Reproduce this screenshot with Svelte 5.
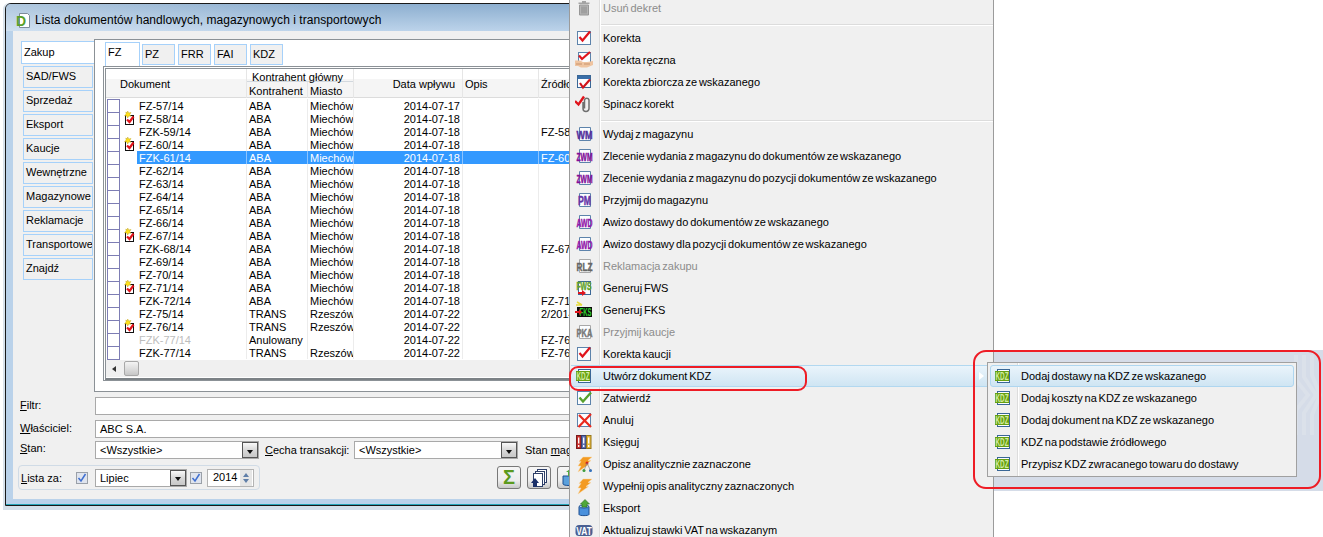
<script>
  const M = 'Miechów', R = 'Rzeszów';
  const rows = [
    ['FZ-57/14', 0, 'ABA', M, '2014-07-17', ''],
    ['FZ-58/14', 1, 'ABA', M, '2014-07-18', ''],
    ['FZK-59/14', 0, 'ABA', M, '2014-07-18', 'FZ-58/14'],
    ['FZ-60/14', 1, 'ABA', M, '2014-07-18', ''],
    ['FZK-61/14', 0, 'ABA', M, '2014-07-18', 'FZ-60/14', 'sel'],
    ['FZ-62/14', 0, 'ABA', M, '2014-07-18', ''],
    ['FZ-63/14', 0, 'ABA', M, '2014-07-18', ''],
    ['FZ-64/14', 0, 'ABA', M, '2014-07-18', ''],
    ['FZ-65/14', 0, 'ABA', M, '2014-07-18', ''],
    ['FZ-66/14', 0, 'ABA', M, '2014-07-18', ''],
    ['FZ-67/14', 1, 'ABA', M, '2014-07-18', ''],
    ['FZK-68/14', 0, 'ABA', M, '2014-07-18', 'FZ-67/14'],
    ['FZ-69/14', 0, 'ABA', M, '2014-07-18', ''],
    ['FZ-70/14', 0, 'ABA', M, '2014-07-18', ''],
    ['FZ-71/14', 1, 'ABA', M, '2014-07-18', ''],
    ['FZK-72/14', 0, 'ABA', M, '2014-07-18', 'FZ-71/14'],
    ['FZ-75/14', 0, 'TRANS', R, '2014-07-22', '2/2014'],
    ['FZ-76/14', 1, 'TRANS', R, '2014-07-22', ''],
    ['FZK-77/14', 0, 'Anulowany', '', '2014-07-22', 'FZ-76/14', 'off'],
    ['FZK-77/14', 0, 'TRANS', R, '2014-07-22', 'FZ-76/14']
  ];
  const sideTabs = ['SAD/FWS', 'Sprzedaż', 'Eksport', 'Kaucje', 'Wewnętrzne', 'Magazynowe', 'Reklamacje', 'Transportowe', 'Znajdź'];
  const topTabs = ['PZ', 'FRR', 'FAI', 'KDZ'];
  const menu = [
    { i: 'trash', t: 'Usuń dekret', off: true },
    { sep: true },
    { i: 'check', t: 'Korekta' },
    { i: 'hand', t: 'Korekta ręczna' },
    { i: 'win', t: 'Korekta zbiorcza ze wskazanego' },
    { i: 'clip', t: 'Spinacz korekt' },
    { sep: true },
    { i: 'WM', t: 'Wydaj z magazynu' },
    { i: 'ZWM', t: 'Zlecenie wydania z magazynu do dokumentów ze wskazanego' },
    { i: 'ZWM', t: 'Zlecenie wydania z magazynu do pozycji dokumentów ze wskazanego' },
    { i: 'PM', t: 'Przyjmij do magazynu' },
    { i: 'AWD', t: 'Awizo dostawy do dokumentów ze wskazanego' },
    { i: 'AWD', t: 'Awizo dostawy dla pozycji dokumentów ze wskazanego' },
    { i: 'RLZ', t: 'Reklamacja zakupu', off: true },
    { i: 'FWS', t: 'Generuj FWS' },
    { i: 'FKS', t: 'Generuj FKS' },
    { i: 'PKA', t: 'Przyjmij kaucje', off: true },
    { i: 'check', t: 'Korekta kaucji' },
    { i: 'KDZ', t: 'Utwórz dokument KDZ', hover: true },
    { i: 'ok', t: 'Zatwierdź' },
    { i: 'x', t: 'Anuluj' },
    { i: 'books', t: 'Księguj' },
    { i: 'boltd', t: 'Opisz analitycznie zaznaczone' },
    { i: 'bolt', t: 'Wypełnij opis analityczny zaznaczonych' },
    { i: 'export', t: 'Eksport' },
    { i: 'VAT', t: 'Aktualizuj stawki VAT na wskazanym' }
  ];
  const sub = ['Dodaj dostawy na KDZ ze wskazanego', 'Dodaj koszty na KDZ ze wskazanego', 'Dodaj dokument na KDZ ze wskazanego', 'KDZ na podstawie źródłowego', 'Przypisz KDZ zwracanego towaru do dostawy'];
  const txtColor = { WM: '#55309c', ZWM: '#820e98', PM: '#6535a8', AWD: '#9216a8', RLZ: '#666', PKA: '#777' };
</script>

{#snippet page()}
  <rect x="2.500" y="2.500" width="13" height="13" fill="#fbfdff" stroke="#5d83ab" />
{/snippet}

{#snippet icon(k)}
  <svg class="ico" width="18" height="18" viewBox="0 0 18 18">
    {#if k === 'trash'}
      <path d="M3.500 3.500h11V5h-11zM7 2h4v1.500H7z" fill="#a3a3a3" />
      <path d="M4.500 6h9v10h-9z" fill="#b5b5b5" stroke="#979797" />
      <path d="M7 7.500v7M9 7.500v7M11 7.500v7" stroke="#8a8a8a" />
    {:else if k === 'check'}
      {@render page()}
      <path d="M4.500 8l3 3.500L15 2.500" fill="none" stroke="#e0141c" stroke-width="2.200" />
    {:else if k === 'hand'}
      <rect x="3.500" y="1.500" width="12" height="10" fill="#fbfdff" stroke="#5d83ab" />
      <path d="M4 4.500l3 3.500 8-7" fill="none" stroke="#e0141c" stroke-width="2.200" />
      <path d="M0 9.500h5l3 1.500h4l6-1v4l-6 2.500H6l-3-1.500H0z" fill="#efc4a0" />
      <path d="M1 13h6M9 13h6" stroke="#c9936c" />
    {:else if k === 'win'}
      <rect x="2.500" y="2.500" width="13" height="12" fill="#fbfdff" stroke="#3a6796" />
      <rect x="3" y="3" width="12" height="3" fill="#3a6ea8" />
      <path d="M5 10l3 4.500 7-8" fill="none" stroke="#d0141c" stroke-width="2.200" />
    {:else if k === 'clip'}
      <path d="M0 6l3.500 3.500L9 1.500" fill="none" stroke="#e0141c" stroke-width="2.400" />
      <path d="M8 7v6.500a3 3 0 0 0 6 0V5a2.300 2.300 0 0 0-4.500 0v8.500" fill="none" stroke="#6f6f6f" stroke-width="1.500" />
    {:else if k === 'KDZ'}
      <rect x="3.500" y="2.500" width="12" height="13" fill="#fbfdff" stroke="#3a6796" />
      <rect x="1" y="4" width="14" height="10" fill="#66a010" />
      <text class="it" x="8" y="12.500" font-size="10" fill="#d4ecA0" textLength="13" lengthAdjust="spacingAndGlyphs">KDZ</text>
    {:else if k === 'FWS'}
      <rect x="3.500" y="2.500" width="12" height="13" fill="#fbfdff" stroke="#3a6796" />
      <text class="it bold" x="9" y="11" font-size="11" fill="#62a22a" stroke="#62a22a" textLength="15" lengthAdjust="spacingAndGlyphs">FWS</text>
      <path d="M3 13h4v-2l4 3-4 3v-2H3z" fill="#e0141c" />
    {:else if k === 'FKS'}
      <path d="M2 1l5 3M1 4h6" stroke="#e6dc3c" stroke-width="1.500" />
      <rect x="2" y="6" width="15" height="10" fill="#0c0c0c" />
      <text class="it" x="10.500" y="14.500" font-size="10.500" fill="#2ed42e" textLength="12" lengthAdjust="spacingAndGlyphs">FKS</text>
      <path d="M0 10h4V8l3 3-3 3v-2H0z" fill="#e0141c" />
    {:else if k === 'ok'}
      {@render page()}
      <path d="M4.500 8.500l3.500 4L16 3.500" fill="none" stroke="#58a02c" stroke-width="2.400" />
    {:else if k === 'x'}
      {@render page()}
      <path d="M4 4l12 12M16 3L3.500 16" fill="none" stroke="#ea2a1e" stroke-width="2.200" />
    {:else if k === 'books'}
      <rect x="1.500" y="2.500" width="4.500" height="13" fill="#c8302c" stroke="#7a1c1c" />
      <rect x="6.500" y="2.500" width="4.500" height="13" fill="#5f6fb0" stroke="#36406e" />
      <rect x="11.500" y="2.500" width="4.500" height="13" fill="#e8b838" stroke="#96761c" />
      <path d="M3.700 4.500v6M3.700 12v2M8.700 4.500v6M8.700 12v2M13.700 4.500v6M13.700 12v2" stroke="#fff" stroke-width="1.300" />
    {:else if k === 'bolt' || k === 'boltd'}
      <path d="M8 2h9l-4 3.500h3l-5 4h2.500L3 17l3-6H3l3-4.500H4z" fill="#f39a22" stroke="#f6d8a8" stroke-width=".5" />
      {#if k === 'boltd'}
        <circle cx="12" cy="8" r="1.500" fill="#d8241c" /><circle cx="9" cy="15.500" r="1.500" fill="#3aa03a" /><circle cx="15.500" cy="15.500" r="1.500" fill="#2a6ec0" />
        <path d="M12 8l-3 7.500M12 8l3.500 7.500" stroke="#777" stroke-width=".6" />
      {/if}
    {:else if k === 'export'}
      <path d="M4 7.500h10v8c0 1.500-10 1.500-10 0z" fill="#4a90dc" stroke="#1e4f90" />
      <ellipse cx="9" cy="7.500" rx="5" ry="1.500" fill="#a8d0f4" stroke="#1e4f90" />
      <path d="M7 8V5H5.500L10 .5l4.500 4.500H12v3z" fill="#50a83a" stroke="#2c6e20" stroke-width=".6" />
    {:else if k === 'VAT'}
      <rect x="0.500" y="4" width="17" height="11" rx="3.500" fill="#4a5f92" />
      <text class="it" x="9" y="13.500" font-size="11" fill="#fff" textLength="15.500" lengthAdjust="spacingAndGlyphs">VAT</text>
    {:else}
      <path d="M4.500 2.500h11v13h-11z" fill="#fbfdff" stroke={k === 'RLZ' || k === 'PKA' ? '#a8a8a8' : '#5d83ab'} />
      <text class="it bold" x="9.500" y="13.500" font-size={k === 'PM' ? 12 : 11.500} fill={txtColor[k]} stroke={txtColor[k]} textLength={k === 'PM' ? 13 : 16} lengthAdjust="spacingAndGlyphs">{k}</text>
    {/if}
  </svg>
{/snippet}

{#snippet combo(text, cls)}
  <div class="combo {cls}"><span class="val">{text}</span><span class="drop"><i></i></span></div>
{/snippet}

<div class="screen">
  <section class="window">
    <header class="title">
      <svg width="17" height="17" viewBox="0 0 17 17" class="logo">
        <path d="M4.500 1.500h8l2 2v12h-10z" fill="#fff" stroke="#7d8c9a" />
        <text x="1" y="13.500" font-size="14" font-weight="700" fill="#5aa028" font-family="Liberation Sans, sans-serif">D</text>
      </svg>
      <span>Lista dokumentów handlowych, magazynowych i transportowych</span>
    </header>
    <div class="body">
      <div class="main">
        <nav class="side">
          <div class="stab active">Zakup</div>
          {#each sideTabs as t}<div class="stab">{t}</div>{/each}
        </nav>
        <div class="panel">
          <div class="toptabs">
            <div class="ttab active">FZ</div>
            {#each topTabs as t}<div class="ttab">{t}</div>{/each}
          </div>
          <div class="grid">
            <div class="inner">
              <div class="cols head">
                <div class="h-cell doc">Dokument</div>
                <div class="group">
                  <div class="gt">Kontrahent główny</div>
                  <div class="gs"><span class="g1">Kontrahent</span><span class="g2">Miasto</span></div>
                </div>
                <div class="h-cell date">Data wpływu</div>
                <div class="h-cell opis">Opis</div>
                <div class="h-cell src">Źródłowy</div>
              </div>
              {#each rows as r}
                <div class="cols row {r[6] || ''}">
                  <div class="chk">
                    <span class="box"></span>
                    {#if r[1]}
                      <svg class="mark" width="12" height="14" viewBox="0 0 12 14">
                        <rect x="1.500" y="4.500" width="8" height="9" fill="#fff" stroke="#111" />
                        <path d="M3 8.500l2.500 2.500L9.500 5.500" fill="none" stroke="#e0141c" stroke-width="2.200" />
                        <path d="M3.700 0l1 2 2.300-.5L5.700 3.500 7 5.300l-2.300-.3-1 2-.9-2L.5 4.600l1.700-1.500L1.800 1l1.500 1z" fill="#ffe21a" stroke="#b89a10" stroke-width=".4" />
                      </svg>
                    {/if}
                  </div>
                  <div class="c">{r[0]}</div>
                  <div class="c">{r[2]}</div>
                  <div class="c">{r[3]}</div>
                  <div class="c right">{r[4]}</div>
                  <div class="c"></div>
                  <div class="c nob">{r[5]}</div>
                </div>
              {/each}
              <div class="scroll"><i class="larrow"></i><span class="thumb"></span></div>
            </div>
          </div>
        </div>
      </div>

      <div class="frow first"><label class="low" for="f1"><u>F</u>iltr:</label><div class="input" id="f1"></div></div>
      <div class="frow second"><label class="low" for="f2"><u>W</u>łaściciel:</label><div class="input" id="f2">ABC S.A.</div></div>
      <div class="frow">
        <label for="f3"><u>S</u>tan:</label>
        {@render combo('<Wszystkie>', 'wide')}
        <span class="l2"><u>C</u>echa transakcji:</span>
        {@render combo('<Wszystkie>', 'wide')}
        <span class="l3">Stan <u>m</u>agazynu:</span>
      </div>
      <div class="bottom">
        <div class="gbox">
          <span class="lz"><u>L</u>ista za:</span>
          <span class="cb"><svg width="12" height="12" viewBox="0 0 12 12"><path d="M2.500 6l2.500 3 4.500-7" fill="none" stroke="#3f6fd0" stroke-width="1.500" /></svg></span>
          {@render combo('Lipiec', 'month')}
          <span class="cb c2"><svg width="12" height="12" viewBox="0 0 12 12"><path d="M2.500 6l2.500 3 4.500-7" fill="none" stroke="#3f6fd0" stroke-width="1.500" /></svg></span>
          <div class="spin"><span>2014</span><div class="sb"><i class="up"></i><i class="down"></i></div></div>
        </div>
        <div class="btns">
          <button class="tb sigma">Σ</button>
          <button class="tb" aria-label="Kopiuj">
            <svg width="20" height="20" viewBox="0 0 20 20">
              <rect x="8.500" y="1.500" width="9" height="13" fill="#fff" stroke="#2e3f68" />
              <rect x="6.500" y="3.500" width="9" height="13" fill="#fff" stroke="#2e3f68" />
              <rect x="4.500" y="5.500" width="9" height="13" fill="#fff" stroke="#2e3f68" />
              <path d="M6 10l4 5H8v4H4v-4H2z" fill="#1a2f68" />
            </svg>
          </button>
          <button class="tb" aria-label="Eksport">
            <svg width="20" height="20" viewBox="0 0 20 20">
              <path d="M4 8h12v8c0 2-12 2-12 0z" fill="#5aa0dc" stroke="#1e4f90" />
              <path d="M9 8V4H7l4-3 4 3h-2v4z" fill="#50a83a" />
            </svg>
          </button>
        </div>
      </div>
    </div>
  </section>

  <div class="behind">
    <svg width="30" height="80" viewBox="0 0 30 80" class="wm"><path d="M3 0v25l12 15L3 55v25M11 0v22l12 18-12 18v22M19 0v20l8 20-8 20v20" fill="none" stroke="#dbe1ea" stroke-width="4" /></svg>
  </div>

  <div class="menu">
    {#each menu as m}
      {#if m.sep}
        <div class="msep"></div>
      {:else}
        <div class="mi" class:off={m.off} class:hover={m.hover}>
          {@render icon(m.i)}
          <span>{m.t}</span>
          {#if m.hover}<i class="marrow"></i>{/if}
        </div>
      {/if}
    {/each}
  </div>

  <div class="submenu">
    {#each sub as s, i}
      <div class="si" class:hover={i === 0}>
        {@render icon('KDZ')}
        <span>{s}</span>
      </div>
    {/each}
  </div>

  <div class="mark-oval"></div>
  <div class="mark-rect"></div>
</div>

<style>
  :global(body) { margin: 0; background: #fff; }
  .screen {
    position: relative; width: 1323px; height: 537px; overflow: hidden; background: #fff;
    font-family: "Liberation Sans", Arial, sans-serif; font-size: 11px; color: #000; line-height: 13px;
  }
  u { text-decoration: underline; }

  .window {
    position: absolute; left: 5px; top: 3px; width: 600px; height: 503px; box-sizing: border-box;
    border: 1px solid #1a1a1a; border-radius: 6px 6px 0 0; background: #bad2ea;
    box-shadow: -2px 0 0 #d9e3ec, -2px 4px 0 #d5e0ea, inset 0 -1px 0 #27a5b8;
    display: flex; flex-direction: column;
  }
  .title {
    height: 27px; display: flex; align-items: center; padding-left: 9px; gap: 3px; flex: none;
    background: linear-gradient(90deg, rgba(255,255,255,.3), rgba(255,255,255,0) 55%), linear-gradient(180deg, #8dafd0, #bcd3ea);
    border-radius: 5px 5px 0 0; font-size: 12px; letter-spacing: .05px; padding-top: 6px; box-sizing: border-box;
  }
  .logo { flex: none; }
  .body { flex: none; height: 468px; margin-left: 7px; background: #f0f0f0; box-sizing: border-box; padding-top: 8px; }

  .main { display: flex; height: 353px; }
  .side { width: 81px; flex: none; padding: 2px 0 0 8px; box-sizing: border-box; display: flex; flex-direction: column; align-items: flex-start; }
  .stab {
    width: 70px; height: 22px; box-sizing: border-box; margin: 0 0 2px 2px; padding-left: 2px;
    border: 1px solid #a6d1fa; line-height: 19px; background: #f0f0f0; white-space: nowrap; overflow: hidden;
  }
  .stab.active { width: 73px; height: 23px; margin: 0 0 2px 0; background: #fff; border-right: none; padding-left: 2px; line-height: 21px; }

  .panel { flex: 1; min-width: 0; border: 1px solid #8b9196; border-right: none; background: #fff; }
  .toptabs { display: flex; height: 24px; margin: 2px 0 0 10px; align-items: flex-start; gap: 3px; }
  .ttab {
    width: 33px; height: 21px; margin-top: 2px; box-sizing: border-box; border: 1px solid #a6d1fa;
    background: #f0f0f0; padding-left: 2px; line-height: 19px;
  }
  .ttab.active { width: 35px; height: 24px; margin: 0 -1px 0 0; background: #fff; border-bottom: none; line-height: 19px; }

  .grid { margin: 0 0 0 8px; height: 315px; box-sizing: border-box; border: 1px solid #8b9196; border-right: none; padding: 1px 0 0 1px; background: #fff; }
  .inner { height: 312px; box-sizing: border-box; border: 1px solid #8b9196; border-right: none; border-bottom: 2px solid #7c8286; }
  .cols { display: grid; grid-template-columns: 31px 110px 61px 46px 109px 76px 80px; }
  .head { height: 30px; background: linear-gradient(180deg, #fff 0, #fff 10px, #f5f5f5 10px, #f5f5f5 28px, #dcdcdc 28px, #dcdcdc 29px, #fff 29px); }
  .h-cell { border-right: 1px solid #e6e6e6; line-height: 31px; height: 29px; }
  .doc { padding-left: 14px; grid-column: 1 / 3; }
  .group { grid-column: 3 / 5; border-right: 1px solid #e6e6e6; height: 29px; }
  .gt { height: 12px; line-height: 17px; padding-left: 5px; border-bottom: 1px solid #d2d8de; }
  .gs { display: grid; grid-template-columns: 61px 46px; }
  .g1 { padding-left: 2px; line-height: 18px; border-right: 1px solid #e6e6e6; height: 16px; }
  .g2 { padding-left: 2px; line-height: 18px; }
  .date { text-align: right; padding-right: 7px; }
  .opis { padding-left: 2px; }
  .src { padding-left: 2px; border-right: none; white-space: nowrap; }

  .row { height: 13px; }
  .chk { display: flex; align-items: flex-start; padding-left: 1px; }
  .box { width: 11px; height: 12px; border: 1px solid #7d7db4; border-bottom: none; flex: none; }
  .row:nth-last-child(2) .box { border-bottom: 1px solid #7d7db4; }
  .mark { margin: -1px 0 0 4px; flex: none; overflow: visible; }
  .c { padding-left: 2px; border-right: 1px solid #ececec; white-space: nowrap; overflow: hidden; line-height: 15px; height: 13px; }
  .c.right { text-align: right; padding: 0 2px 0 0; }
  .c.nob { border-right: none; }
  .sel .c { background: #3399ff; color: #fff; border-right-color: #8cc4ff; }
  .off .c:nth-child(2) { color: #bdbdbd; }

  .scroll { height: 17px; margin-top: 1px; background: #f0f0f0; display: flex; align-items: center; }
  .larrow { width: 0; height: 0; border: 3px solid transparent; border-right: 4px solid #333; border-left: none; margin-left: 6px; }
  .thumb { width: 15px; height: 15px; margin-left: 8px; box-sizing: border-box; border: 1px solid #a8a8a8; border-radius: 2px; background: linear-gradient(180deg, #f4f4f4, #dcdcdc 55%, #c6c6c6); }

  .frow { display: flex; align-items: center; height: 18px; margin-top: 3px; }
  .frow.first, .frow.second { margin-top: 5px; }
  .frow label { width: 82px; flex: none; padding-left: 7px; box-sizing: border-box; height: 18px; line-height: 15px; }
  .frow label.low { line-height: 17px; }
  .input { flex: 1; height: 18px; box-sizing: border-box; border: 1px solid #a9a9a9; background: #fff; padding-left: 4px; line-height: 17px; }
  .combo { height: 18px; box-sizing: border-box; border: 1px solid #a9a9a9; background: #fff; display: flex; flex: none; align-items: stretch; }
  .combo.wide { width: 164px; }
  .combo.month { width: 92px; margin-left: 7px; }
  .val { flex: 1; padding-left: 4px; line-height: 17px; }
  .drop { width: 16px; box-sizing: border-box; border: 1px solid #555; background: linear-gradient(180deg, #fafafa, #d8d8d8 50%, #c8c8c8); display: flex; align-items: center; justify-content: center; }
  .drop i { width: 0; height: 0; border: 3px solid transparent; border-top: 4px solid #111; border-bottom: none; margin-top: 3px; }
  .l2 { margin: 0 6px; width: 83px; flex: none; white-space: nowrap; }
  .l3 { margin-left: 7px; white-space: nowrap; }

  .bottom { display: flex; margin-top: 6px; margin-left: 5px; align-items: flex-start; }
  .gbox {
    width: 242px; height: 25px; box-sizing: border-box; border: 1px solid #d0dbe6; border-radius: 4px;
    display: flex; align-items: center; padding-left: 2px; flex: none;
  }
  .lz { width: 55px; flex: none; line-height: 15px; height: 13px; }
  .cb { width: 12px; height: 12px; border: 1px solid #9aa0a8; box-sizing: border-box; background: #dfe4ee; display: block; flex: none; }
  .cb svg { display: block; margin: -1px; }
  .c2 { margin-left: 3px; }
  .spin { width: 47px; height: 18px; margin-left: 5px; box-sizing: border-box; border: 1px solid #b4b4b4; background: #fff; display: flex; align-items: center; padding-left: 5px; justify-content: space-between; }
  .sb { width: 12px; height: 16px; display: flex; flex-direction: column; align-items: center; justify-content: center; gap: 2px; background: #e6e6e6; margin-right: 1px; }
  .up { width: 0; border: 3px solid transparent; border-bottom: 4px solid #5f7ea8; border-top: none; }
  .down { width: 0; border: 3px solid transparent; border-top: 4px solid #5f7ea8; border-bottom: none; }
  .btns { display: flex; gap: 6px; margin-left: 237px; margin-top: 1px; }
  .tb {
    width: 24px; height: 23px; padding: 0; box-sizing: border-box; border: 1px solid #787878; border-radius: 3px;
    background: linear-gradient(180deg, #f6f6f6, #ececec 65%, #c8c8c8); display: flex; align-items: center; justify-content: center; font: inherit;
  }
  .sigma { color: #5b9a1e; font-size: 20px; font-weight: 700; font-family: "Liberation Sans", sans-serif; }

  .behind { position: absolute; left: 993px; top: 350px; width: 330px; height: 141px; background: #d5dce8; overflow: hidden; }
  .wm { position: absolute; right: 0; top: 5px; }

  .menu {
    position: absolute; left: 569px; top: -3px; width: 425px; height: 560px; box-sizing: border-box;
    border: 1px solid #9b9b9b; border-width: 0 1px; word-spacing: -1.25px;
    background: linear-gradient(90deg, #f0f0f0 0 29px, #dcdcdc 29px 30px, #fff 30px 31px, #f0f0f0 31px);
  }
  .mi { height: 22px; display: flex; align-items: center; box-sizing: border-box; padding-left: 5px; position: relative; white-space: nowrap; }
  .mi span { margin-left: 10px; }
  .mi.off { color: #8c8c8c; }
  .mi.hover { background: linear-gradient(180deg, #eaf4fb, #cfe5f3); border: 1px solid #b2d8f0; border-width: 1px 0; margin: 0 0 0 1px; padding-left: 4px; }
  .msep { height: 8px; margin-left: 31px; position: relative; }
  .msep::after { content: ""; display: block; position: absolute; left: 0; right: 0; top: 5px; height: 1px; background: #dcdcdc; box-shadow: 0 1px 0 #fff; }
  .marrow { position: absolute; right: 9px; top: 6px; width: 0; height: 0; border: 4px solid transparent; border-left: 5px solid #fff; border-right: none; }
  .ico { flex: none; display: block; }
  .it { font-family: "Liberation Sans", sans-serif; font-weight: 700; text-anchor: middle; }
  .bold { stroke-width: .45px; }

  .submenu {
    position: absolute; left: 987px; top: 362px; width: 310px; height: 115px; box-sizing: border-box; padding: 2px; word-spacing: -1.25px;
    border: 1px solid #a0a0a0; background: linear-gradient(90deg, #f0f0f0 0 29px, #dcdcdc 29px 30px, #fff 30px 31px, #f0f0f0 31px);
  }
  .si { height: 22px; display: flex; align-items: center; box-sizing: border-box; padding-left: 3px; white-space: nowrap; border: 1px solid transparent; }
  .si.hover { background: linear-gradient(180deg, #eaf4fb, #cfe5f3); border-color: #aed6f0; border-radius: 3px; }
  .si span { margin-left: 9px; }

  .mark-oval { position: absolute; left: 569px; top: 366px; width: 238px; height: 25px; box-sizing: border-box; border: 2px solid #ee1c25; border-radius: 9px; pointer-events: none; }
  .mark-rect { position: absolute; left: 973px; top: 350px; width: 348px; height: 139px; box-sizing: border-box; border: 2px solid #ee1c25; border-radius: 13px; pointer-events: none; }
</style>
